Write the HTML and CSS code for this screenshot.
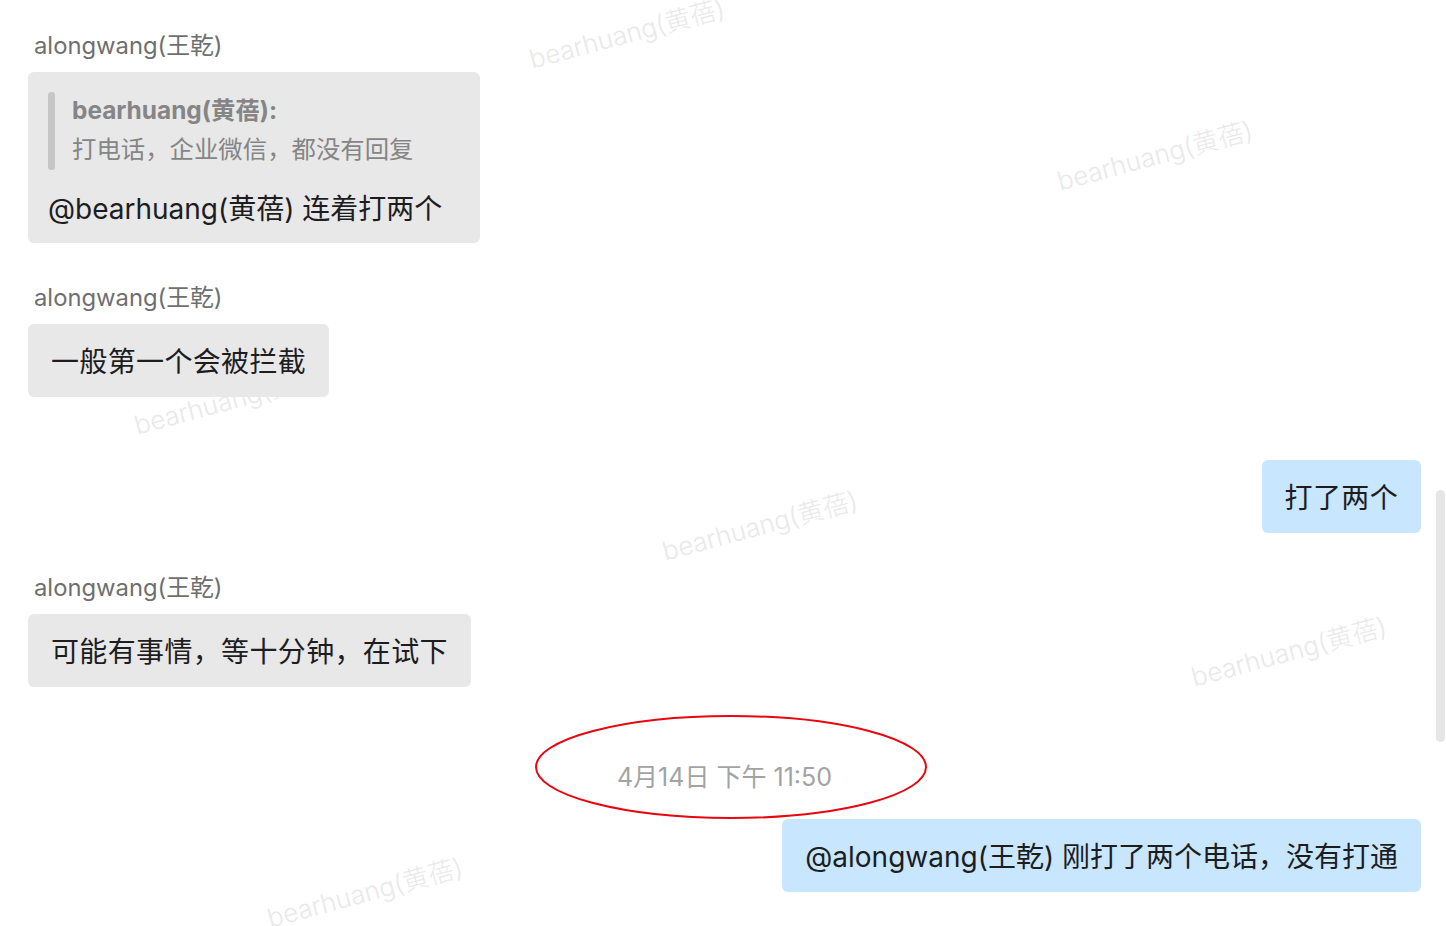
FILE: index.html
```html
<!DOCTYPE html>
<html lang="zh-CN">
<head>
<meta charset="utf-8">
<title>Chat</title>
<link rel="stylesheet" href="styles.css">
</head>
<body>
<div class="page">
  <div class="watermarks">
    <span class="wm" style="left:627px;top:34px">bearhuang(黄蓓)</span>
    <span class="wm" style="left:1155px;top:156px">bearhuang(黄蓓)</span>
    <span class="wm" style="left:232px;top:400px">bearhuang(黄蓓)</span>
    <span class="wm" style="left:760px;top:526px">bearhuang(黄蓓)</span>
    <span class="wm" style="left:1289px;top:652px">bearhuang(黄蓓)</span>
    <span class="wm" style="left:365px;top:893px">bearhuang(黄蓓)</span>
  </div>

  <div class="chat">
    <div class="msg">
      <div class="name">alongwang(王乾)</div>
      <div class="bubble bubble-quote">
        <div class="quote">
          <div class="quote-bar"></div>
          <div class="quote-body">
            <div class="quote-title">bearhuang(黄蓓):</div>
            <div class="quote-text">打电话，企业微信，都没有回复</div>
          </div>
        </div>
        <div class="quote-reply">@bearhuang(黄蓓) 连着打两个</div>
      </div>
    </div>

    <div class="msg">
      <div class="name">alongwang(王乾)</div>
      <div class="bubble bubble-cjk">一般第一个会被拦截</div>
    </div>

    <div class="msg msg-self msg-self-first">
      <div class="bubble bubble-self bubble-cjk">打了两个</div>
    </div>

    <div class="msg">
      <div class="name">alongwang(王乾)</div>
      <div class="bubble bubble-cjk">可能有事情，等十分钟，在试下</div>
    </div>

    <div class="time">4月14日 下午 11:50</div>

    <div class="msg msg-self msg-after-time">
      <div class="bubble bubble-self">@alongwang(王乾) 刚打了两个电话，没有打通</div>
    </div>
  </div>

  <svg class="annotation" width="400" height="110" viewBox="0 0 400 110">
    <ellipse cx="196" cy="52" rx="195" ry="51" fill="none" stroke="#e8060f" stroke-width="2"/>
  </svg>

  <div class="scrollbar"></div>
</div>
</body>
</html>
```

FILE: styles.css
```css
* { box-sizing: border-box; }

html, body {
  margin: 0;
  padding: 0;
  background: #ffffff;
}

body {
  font-family: Inter, "Noto Sans CJK SC", sans-serif;
  color: #1d1d1f;
  overflow: hidden;
}

.page {
  position: relative;
  width: 1446px;
  height: 926px;
  overflow: hidden;
}

.watermarks {
  position: absolute;
  inset: 0;
  z-index: 0;
  pointer-events: none;
}

.wm {
  position: absolute;
  transform: translate(-50%, -50%) rotate(-15deg);
  font-size: 26px;
  font-weight: 300;
  color: #e9e9e9;
  white-space: nowrap;
  line-height: 1;
}

.chat {
  position: relative;
  z-index: 1;
  display: flex;
  flex-direction: column;
  padding: 31px 25px 0 28px;
}

.msg {
  display: flex;
  flex-direction: column;
  align-items: flex-start;
  margin-top: 40px;
}

.msg:first-child { margin-top: 0; }

.msg-self { align-items: flex-end; }
.msg-self-first { margin-top: 63px; }
.msg-after-time { margin-top: 27px; }

.name {
  font-size: 23.8px;
  line-height: 30px;
  color: #6f6f6f;
  padding-left: 6px;
  margin-bottom: 11px;
}

.bubble {
  background: #e8e8e8;
  border-radius: 6px;
  font-size: 28px;
  line-height: 37px;
  padding: 20px 23px 16px;
  white-space: nowrap;
}

.bubble-cjk {
  letter-spacing: 0.35px;
}

.bubble-self {
  background: #c9e6ff;
}

.bubble-quote {
  padding: 20px 38px 15px 20px;
}

.quote {
  display: flex;
  align-items: stretch;
}

.quote-bar {
  width: 7px;
  border-radius: 3px;
  background: #c6c6c6;
  flex: none;
}

.quote-body {
  margin-left: 17px;
  padding-bottom: 1px;
  color: #858585;
  font-size: 24.4px;
}

.quote-title {
  font-weight: 700;
  line-height: 36px;
}

.quote-text {
  line-height: 40px;
  padding-top: 1px;
}

.quote-reply {
  margin-top: 21px;
}

.time {
  align-self: center;
  margin-top: 75px;
  font-size: 25px;
  line-height: 30px;
  color: #a3a3a3;
}

.annotation {
  position: absolute;
  left: 535px;
  top: 715px;
  z-index: 2;
}

.scrollbar {
  position: absolute;
  left: 1436px;
  top: 490px;
  width: 9px;
  height: 252px;
  border-radius: 5px;
  background: #e6e6e6;
  z-index: 2;
}
```
